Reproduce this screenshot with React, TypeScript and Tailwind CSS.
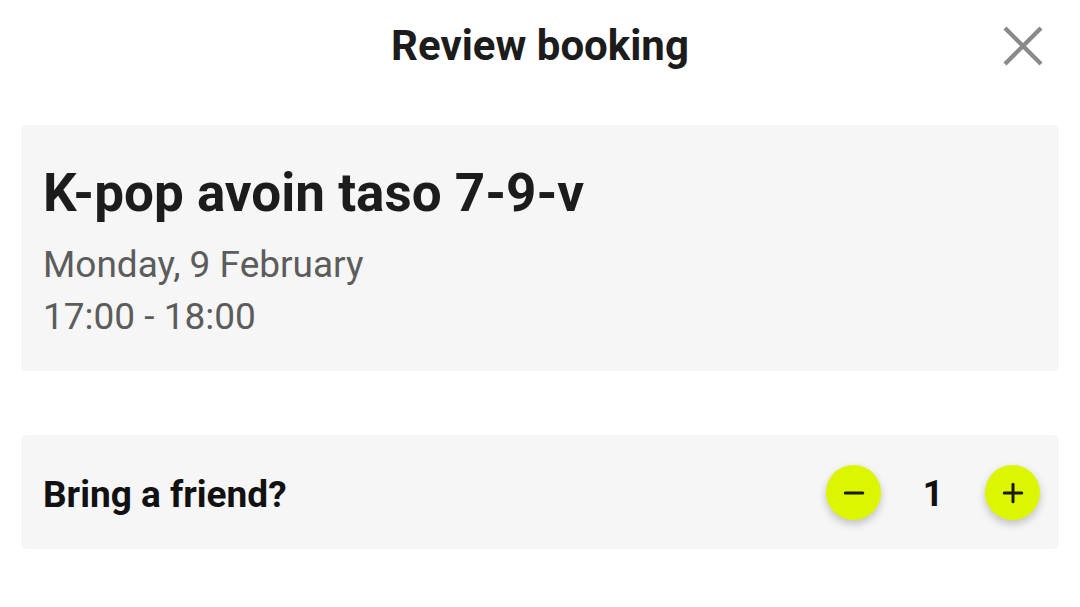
import { Minus, Plus } from "lucide-react";

export default function App() {
  return (
    <div
      className="w-[1080px] h-[607px] bg-white overflow-hidden"
      style={{ fontFamily: "Roboto, 'Liberation Sans', sans-serif" }}
    >
      {/* header */}
      <div className="relative h-[92px] flex items-center justify-center">
        <h1 className="text-[42px] font-bold text-[#1c1c1c] leading-none -mt-[1px]">Review booking</h1>
        <button className="absolute left-[1003px] top-[26px]">
          <svg width="40" height="40" viewBox="0 0 40 40" fill="none" stroke="#8a8a8a" strokeWidth="4.3">
            <path d="M2 2L38 38M38 2L2 38" />
          </svg>
        </button>
      </div>

      <div className="px-[21px] pt-[33px] flex flex-col gap-[64px]">
        {/* class card */}
        <div className="bg-[#f6f6f6] rounded-[6px] h-[246px] px-[22px] pt-[40px]">
          <h2 className="text-[53px] font-bold text-[#1c1c1c] leading-[56px]">K-pop avoin taso 7-9-v</h2>
          <div className="mt-[18px] text-[37px] text-[#5c5c5c] leading-[52px]">
            <p>Monday, 9 February</p>
            <p>17:00 - 18:00</p>
          </div>
        </div>

        {/* friend counter */}
        <div className="bg-[#f6f6f6] rounded-[6px] h-[114px] pl-[22px] pr-[19px] pt-[5px] flex items-center justify-between">
          <span className="text-[37px] font-bold text-[#111]">Bring a friend?</span>
          <div className="flex items-center -mt-[4px]">
            <button className="w-[55px] h-[55px] rounded-full bg-[#dcf600] flex items-center justify-center shadow-[0_4px_8px_rgba(0,0,0,0.22)]">
              <Minus size={30} strokeWidth={2.4} className="text-[#1a1a1a]" />
            </button>
            <span className="w-[104px] text-center text-[36px] font-bold text-[#111] mt-[3px]">1</span>
            <button className="w-[55px] h-[55px] rounded-full bg-[#dcf600] flex items-center justify-center shadow-[0_4px_8px_rgba(0,0,0,0.22)]">
              <Plus size={30} strokeWidth={2.4} className="text-[#1a1a1a]" />
            </button>
          </div>
        </div>
      </div>
    </div>
  );
}
